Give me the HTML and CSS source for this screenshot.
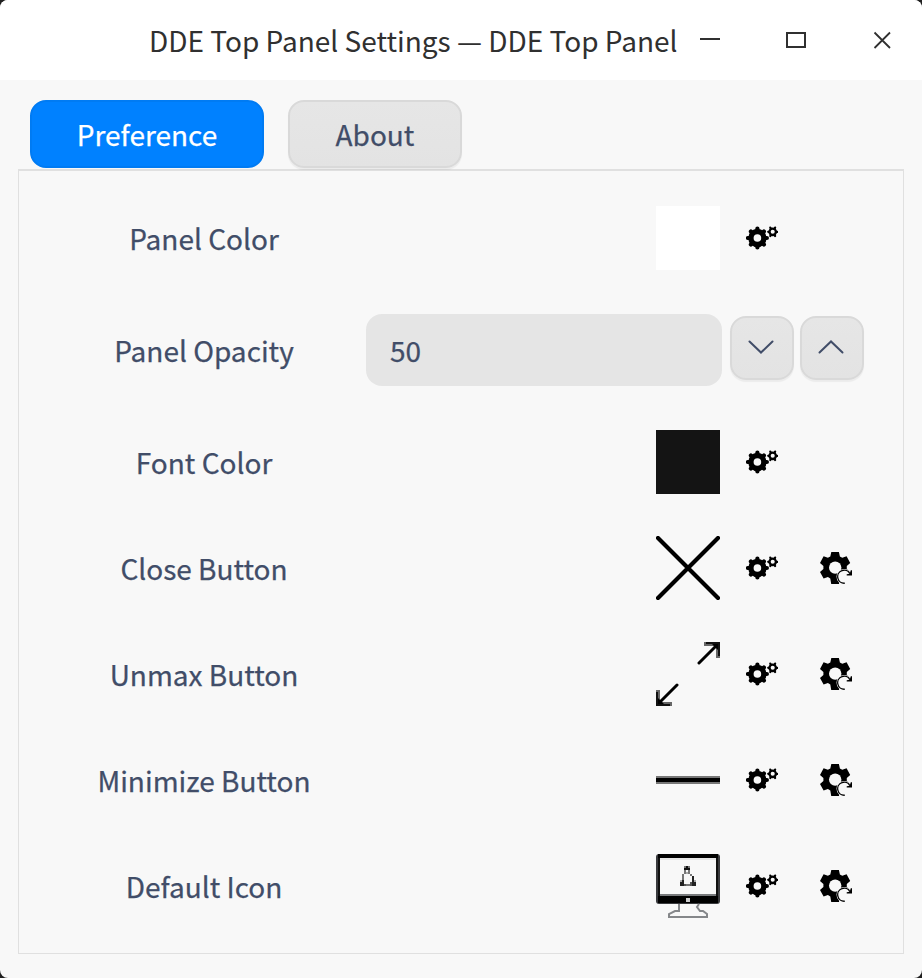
FILE: index.html
```html
<!DOCTYPE html>
<html lang="en">
<head>
<meta charset="utf-8">
<title>DDE Top Panel Settings</title>
<link rel="stylesheet" href="styles.css">
</head>
<body>
<svg class="defs" width="0" height="0">
  <symbol id="gears" viewBox="0 0 32 32">
    <circle cx="11.4" cy="16" r="6.500" fill="none" stroke="#000" stroke-width="5.400"/>
    <path d="M11.4 6.500V8M11.4 24v1.500M1.900 16h1.500M19.400 16h1.500M4.900 9.500l1.200 1.200M17.900 22.500l-1.200-1.200M4.900 22.500l1.200-1.200M17.900 9.500l-1.200 1.200" stroke="#000" stroke-width="4.200" stroke-linecap="round"/>
    <circle cx="26.700" cy="9.800" r="3.200" fill="none" stroke="#000" stroke-width="2.300"/>
    <path d="M30.400 9.800h.8M22.200 9.800h.8M28.700 6.400l.4-.8M24.700 13.200l-.4.800M28.700 13.200l.4.800M24.700 6.400l-.4-.8" stroke="#000" stroke-width="2.200" stroke-linecap="round"/>
  </symbol>
  <symbol id="reset" viewBox="0 0 32 32">
    <path d="M11.300 0h7.600l1 4.400 2.400 1.400 4.300-1.500 3.600 6.600-3.400 3.100v3l3.400 3-3.600 6.600-4.300-1.500-2.400 1.400-1 6h-7.600l-1-6-2.400-1.400-4.300 1.500L0 20l3.400-3v-3L0 10.900l3.600-6.600 4.300 1.500 2.400-1.400z"/>
    <circle cx="15.200" cy="15.600" r="6.200" fill="#f8f8f8"/>
    <circle cx="24.300" cy="24.700" r="7.800" fill="#f8f8f8"/>
    <path d="M24.800 31.200A6.500 6.500 0 1 1 30 21.800" fill="none" stroke="#000" stroke-width="1.300"/>
    <path d="M32 18.300v5.200h-5.300v-1.300l3-.4 1.100-3.500z"/>
  </symbol>
</svg>
<div class="window">
  <header class="titlebar">
    <h1 class="title">DDE Top Panel Settings — DDE Top Panel</h1>
    <div class="controls">
      <svg width="20" height="24" viewBox="0 0 20 24"><path d="M0 11h20" stroke="#303030" stroke-width="2"/></svg>
      <svg width="20" height="24" viewBox="0 0 20 24"><path d="M1 5h18v14H1z" fill="none" stroke="#303030" stroke-width="2"/></svg>
      <svg width="20" height="24" viewBox="0 0 20 24"><path d="M2.500 4.500l15.500 15.500M18 4.500L2.500 20" stroke="#303030" stroke-width="1.800"/></svg>
    </div>
  </header>
  <nav class="tabs">
    <button class="tab active">Preference</button>
    <button class="tab">About</button>
  </nav>
  <main class="panel">
    <div class="row tall">
      <span class="label">Panel Color</span>
      <span class="preview white"></span>
      <svg class="icon"><use href="#gears"/></svg>
    </div>
    <div class="row tall">
      <span class="label">Panel Opacity</span>
      <span class="field">50</span>
      <button class="step"><svg width="28" height="16" viewBox="0 0 28 16"><path d="M2.500 1.500L14 12.500l11.500-11"/></svg></button>
      <button class="step"><svg width="28" height="16" viewBox="0 0 28 16"><path d="M2.500 12.500L14 1.500l11.500 11"/></svg></button>
    </div>
    <div class="row">
      <span class="label">Font Color</span>
      <span class="preview black"></span>
      <svg class="icon"><use href="#gears"/></svg>
    </div>
    <div class="row">
      <span class="label">Close Button</span>
      <svg class="preview" viewBox="0 0 32 32"><path d="M1 1l30 30M31 1L1 31" stroke="#000" stroke-width="2.100" stroke-linecap="round"/></svg>
      <svg class="icon"><use href="#gears"/></svg>
      <svg class="icon reset"><use href="#reset"/></svg>
    </div>
    <div class="row">
      <span class="label">Unmax Button</span>
      <svg class="preview" viewBox="0 0 32 32">
        <path d="M21.500 10.500L31 1M10.500 21.500L1 31" stroke="#000" stroke-width="1.500" stroke-linecap="round"/>
        <path d="M24 0h8v8h-2V2h-6zM0 24h2v6h6v2H0z" fill="#666"/>
        <path d="M25 0h7v7h-1V1h-6zM0 25h1v6h6v1H0z" fill="#111"/>
        <path d="M28 1h3v3zM1 28v3h3z"/>
      </svg>
      <svg class="icon"><use href="#gears"/></svg>
      <svg class="icon reset"><use href="#reset"/></svg>
    </div>
    <div class="row">
      <span class="label">Minimize Button</span>
      <svg class="preview" viewBox="0 0 32 32"><path d="M0 14h32v4H0z" fill="#777"/><path d="M0 15h32v2H0z"/></svg>
      <svg class="icon"><use href="#gears"/></svg>
      <svg class="icon reset"><use href="#reset"/></svg>
    </div>
    <div class="row">
      <span class="label">Default Icon</span>
      <svg class="preview" viewBox="0 0 32 32">
        <rect width="32" height="25" rx="1.500" fill="#3a3b3e"/>
        <path d="M1 0h30v2H1zM1 21h30v3.500H1z"/>
        <path d="M1 2h1v19H1zM30 2h1v19h-1z" fill="#111"/>
        <path d="M2 2h28v18H2z" fill="#f8f8f8"/>
        <path d="M2 2h28v1H2z" fill="#e4e4e4"/>
        <path d="M2 20h28v1H2z" fill="#77797b"/>
        <path d="M15 22h2v2h-2z" fill="#ccc"/>
        <path d="M11.500 25v3.500h-2l-3 1.500v1.500h19v-1.500l-2-1.500h-1.500l-1.500-2 1-1.500" fill="none" stroke="#85878a"/>
        <path d="M14 7h3v1h-3zM15 6h1v1h-1z" fill="#111"/>
        <path d="M14 6h1v1h-1zM16 6h1v1h-1zM14 8h1v2h-1zM16 8h1v2h-1zM13 10h1v3h-1zM17 10h1v1h-1zM15 15h2v1h-2z" fill="#777"/>
        <path d="M15 9h1v1h-1zM12 13h1v1h-1zM19 13h1v1h-1z" fill="#aaa"/>
        <path d="M18 11h1v3h-1zM13 13h1v1h-1zM12 14h2v2h-2zM18 14h2v2h-2z" fill="#222"/>
        <path d="M14 15h1v1h-1zM17 14h1v2h-1z" fill="#555"/>
      </svg>
      <svg class="icon"><use href="#gears"/></svg>
      <svg class="icon reset"><use href="#reset"/></svg>
    </div>
  </main>
</div>
</body>
</html>
```
FILE: styles.css
```css
* { box-sizing: border-box; }
body {
  margin: 0;
  background: #202020;
  font-family: "Noto Sans CJK SC", "Noto Sans", sans-serif;
  font-size: 28px;
  color: #414d68;
}
.defs { position: absolute; }
.window {
  width: 922px;
  height: 978px;
  background: #f8f8f8;
  border-radius: 8px;
  overflow: hidden;
}
.titlebar {
  height: 80px;
  padding: 0 30px 0 149px;
  display: flex;
  align-items: center;
  justify-content: space-between;
  background: #fff;
  color: #303030;
}
.title {
  margin: 0;
  font-size: 28px;
  font-weight: 400;
  line-height: 80px;
  white-space: nowrap;
}
.controls { display: flex; gap: 66px; }
.controls svg { display: block; }
.tabs {
  display: flex;
  gap: 24px;
  padding: 20px 30px 0;
}
.tab {
  width: 174px;
  height: 68px;
  padding: 0;
  border: 2px solid #d9d9d9;
  border-radius: 16px;
  background: linear-gradient(#e6e6e6, #e3e3e3);
  box-shadow: 0 2px 1px rgba(0, 0, 0, .05);
  font: inherit;
  color: #414d68;
  -webkit-text-stroke: .25px;
}
.tab.active {
  width: 234px;
  background: #0081ff;
  border-color: #007bf3;
  box-shadow: none;
  color: #fff;
}
.panel {
  width: 886px;
  height: 785px;
  margin: 1px 18px 0;
  padding: 35px 0 0 23px;
  border: 1px solid #e0e0e0;
  border-top-width: 2px;
  display: flex;
  flex-direction: column;
  gap: 42px;
}
.row {
  display: grid;
  grid-template-columns: 324px 356px 64px 64px;
  align-items: center;
  min-height: 64px;
}
.row.tall { margin-bottom: 2px; }
.label { text-align: center; line-height: 44px; -webkit-text-stroke: .25px; }
.preview {
  display: block;
  width: 64px;
  height: 64px;
  justify-self: end;
  margin-right: 2px;
}
.white { background: #fff; }
.black { background: #141414; }
.icon { width: 32px; height: 32px; margin-left: 24px; }
.icon.reset { margin-left: 34px; }
.field {
  height: 72px;
  padding: 0 24px;
  border-radius: 16px;
  background: #e5e5e5;
  line-height: 72px;
  -webkit-text-stroke: .25px;
}
.step {
  width: 64px;
  height: 64px;
  margin: -4px 0 0 8px;
  padding: 0 2px 0 0;
  display: grid;
  place-items: center;
  border: 2px solid #d9d9d9;
  border-radius: 16px;
  background: linear-gradient(#e6e6e6, #e3e3e3);
  box-shadow: 0 2px 1px rgba(0, 0, 0, .05);
}
.step + .step { margin-left: 14px; }
.step path { fill: none; stroke: #414d68; stroke-width: 2; stroke-linecap: round; }
```
